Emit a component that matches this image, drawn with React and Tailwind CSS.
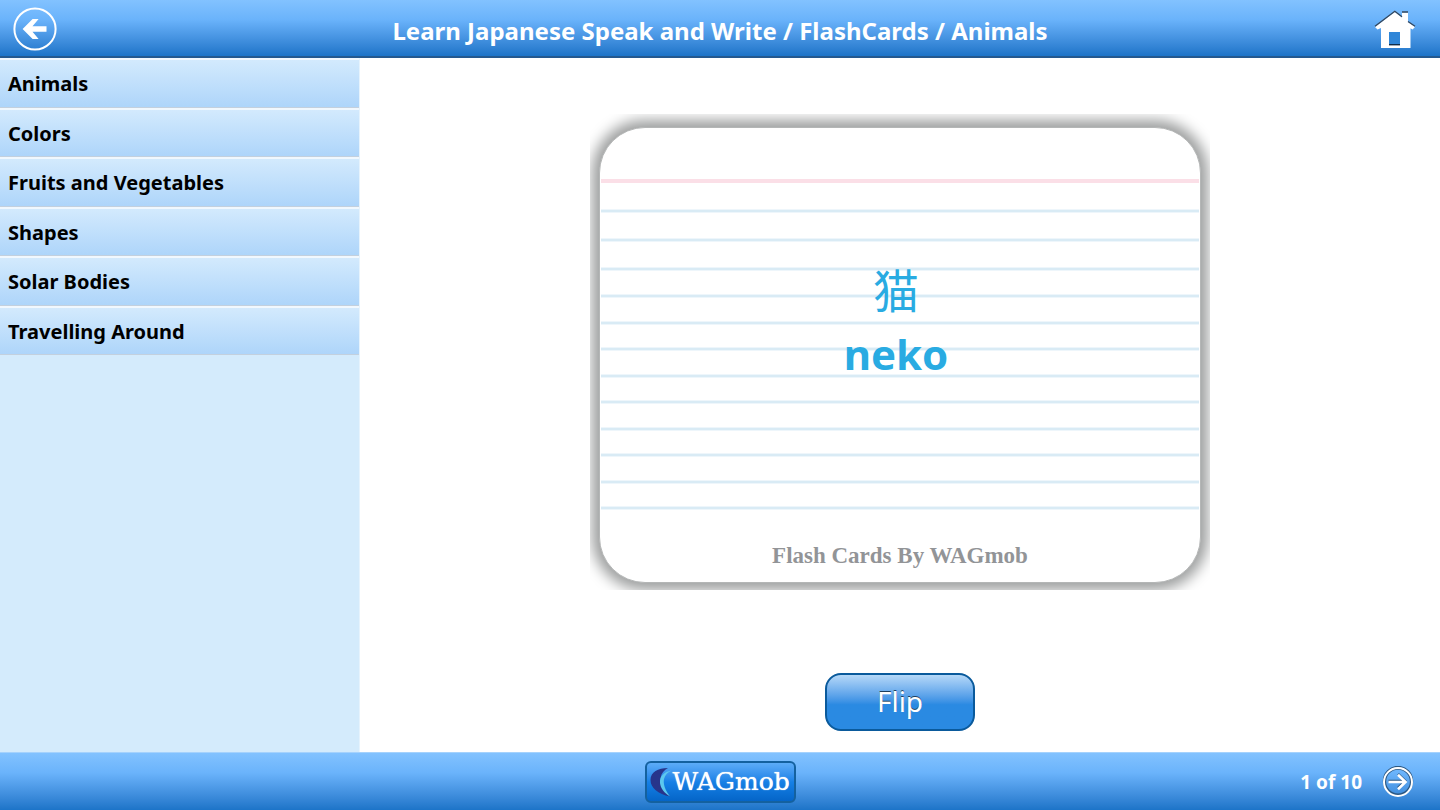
const topics = ['Animals', 'Colors', 'Fruits and Vegetables', 'Shapes', 'Solar Bodies', 'Travelling Around'];

const blueRules = [83, 112, 141, 168, 195, 221, 248, 274, 301, 327, 354, 380];

function BackIcon() {
  return (
    <svg viewBox="0 0 44 44" className="size-11" fill="none" aria-hidden="true">
      <circle cx="22" cy="22" r="20.6" stroke="#fff" strokeWidth="2" />
      <path d="M33.5 19.2H19.5L25.6 12H19.6L9.6 22L19.6 32H25.6L19.5 24.8H33.5Z" fill="#fff" />
    </svg>
  );
}

function HomeIcon() {
  return (
    <svg viewBox="0 0 42 40" className="h-10 w-[42px]" aria-hidden="true">
      <path d="M1 17L20.8 2L28 7.6V2.5H34V12L41 17L38.5 19.5L36.5 18.2V38H7V18L3.5 19.5Z" fill="#fff" />
      <path d="M1 16.2L20.8 1.2L28 6.8M28 2H34M34 11.5L41 16.2" fill="none" stroke="#34475c" strokeWidth="1.3" />
      <rect x="15" y="22" width="11" height="13" fill="#2f86d8" />
      <rect x="15" y="34" width="11" height="1.4" fill="#102c48" />
    </svg>
  );
}

function NextIcon() {
  return (
    <svg viewBox="0 0 32 32" className="size-8" fill="none" aria-hidden="true">
      <circle cx="16" cy="15" r="14.5" stroke="#2c5780" strokeWidth="1.4" />
      <circle cx="16" cy="15.6" r="12.6" stroke="#2c5780" strokeWidth="1.4" />
      <circle cx="16" cy="16" r="14" stroke="#fff" strokeWidth="2" />
      <path d="M6.5 15H23M16 8L23.200 15L16 22" stroke="#2c5780" strokeWidth="2.600" />
      <path d="M6.5 16H23.500M16 8.800L23.500 16L16 23.200" stroke="#fff" strokeWidth="2.600" />
    </svg>
  );
}

function PaperLines() {
  return (
    <svg viewBox="0 0 600 454" preserveAspectRatio="none" className="absolute inset-0 size-full" aria-hidden="true">
      <rect x="1" y="51" width="598" height="4" fill="#fbdfe7" />
      {blueRules.map((y) => (
        <g key={y}>
          <rect x="1" y={y - 2} width="598" height="4" fill="#eef6fb" />
          <rect x="1" y={y - 1} width="598" height="2" fill="#d9ebf5" />
        </g>
      ))}
    </svg>
  );
}

function Logo() {
  return (
    <div className="flex h-[42px] w-[151px] items-center rounded-md border-2 border-[#14619f] bg-linear-to-b from-[#5cacf8] via-[#1580e6] to-[#0565c8] pl-0.5">
      <svg viewBox="0 0 24 32" className="h-8 w-6 shrink-0" aria-hidden="true">
        <path d="M19 2C9 2 1.500 6 1.500 14C1.500 22 9 28 21 30.500C14 24 10.500 18 11.500 12C12.500 7 15 4 19 2Z" fill="#27348b" />
        <path d="M22.500 4.500C15 6 10.500 10 11 17C11.500 22 15 27 21 30.500C16 24 14 18 15 13C16 9 19 6 22.500 4.500Z" fill="#5cc8ee" />
      </svg>
      <span className="font-['DejaVu_Serif',serif] text-[25px] leading-none text-white text-shadow-[0_0_1px_#ffffff]">WAGmob</span>
    </div>
  );
}

export default function App() {
  return (
    <div className="flex min-h-screen flex-col bg-white font-['Noto_Sans','Noto_Sans_CJK_JP',sans-serif]">
      <header className="grid h-[58px] grid-cols-[48px_1fr_48px] items-center border-b-2 border-[#24598f] bg-linear-to-b from-[#82c2ff] via-[#6ab3fb] via-35% to-[#1c74c8] px-3">
        <button type="button" aria-label="Back" className="justify-self-start pt-0.5 pl-px"><BackIcon /></button>
        <h1 className="pt-1.5 text-center text-2xl leading-8 font-bold text-white">
          Learn Japanese Speak and Write / FlashCards / Animals
        </h1>
        <a href="#home" aria-label="Home" className="justify-self-end pt-1 pr-3"><HomeIcon /></a>
      </header>

      <div className="grid flex-1 grid-cols-[1fr_3fr]">
        <nav aria-label="Categories" className="border-r border-[#e6f3fd] bg-[#d4ebfc]">
          <ul className="grid h-[297px] grid-rows-6">
            {topics.map((topic) => (
              <li key={topic} className="grid">
                <a
                  href="#topic"
                  className="flex items-center border-t-2 border-b border-t-[#f1f8fe] border-b-[#c3d0de] bg-linear-to-b from-[#d3eafd] to-[#aed5fa] px-2 pt-0.5 text-xl leading-7 font-bold text-black"
                >
                  {topic}
                </a>
              </li>
            ))}
          </ul>
        </nav>

        <main className="flex flex-col items-center px-4 pt-14 pb-5">
          <section className="w-full max-w-[620px] overflow-hidden px-[9px] pt-[13px] pb-[7px]">
            <div className="relative flex h-[456px] flex-col items-center rounded-[46px] border border-[#b4b6b6] bg-white shadow-[0_0_14px_7px_#9c9e9e]">
              <PaperLines />
              <div className="relative flex flex-1 flex-col items-center pt-32 pr-2 text-[#29abe2]">
                <p lang="ja" className="font-['Noto_Sans_CJK_JP',sans-serif] text-[46px] leading-16">猫</p>
                <p className="pt-0.5 text-[42px] leading-16 font-bold">neko</p>
              </div>
              <p className="relative pb-2.5 font-['Liberation_Serif',serif] text-[23px] leading-8 font-bold text-[#929497]">
                Flash Cards By WAGmob
              </p>
            </div>
          </section>
          <button
            type="button"
            className="mt-[83px] h-[58px] w-[150px] rounded-2xl border-2 border-[#0a5a9c] bg-linear-to-b from-[#b5d8f8] via-[#2a8ae2] via-55% to-[#2a8ae2] pb-0.5 text-[28px] leading-9 text-white text-shadow-[0_-1px_0_#1d3e5c]"
          >
            Flip
          </button>
        </main>
      </div>

      <footer className="grid h-[58px] grid-cols-[1fr_auto_1fr] items-center border-t border-[#a5d2fd] bg-linear-to-b from-[#82c2ff] via-[#6ab3fb] via-35% to-[#1c74c8] px-[26px]">
        <span />
        <Logo />
        <div className="flex items-center gap-5 justify-self-end">
          <span className="text-[19px] leading-7 font-bold text-white">1 of 10</span>
          <button type="button" aria-label="Next card"><NextIcon /></button>
        </div>
      </footer>
    </div>
  );
}
